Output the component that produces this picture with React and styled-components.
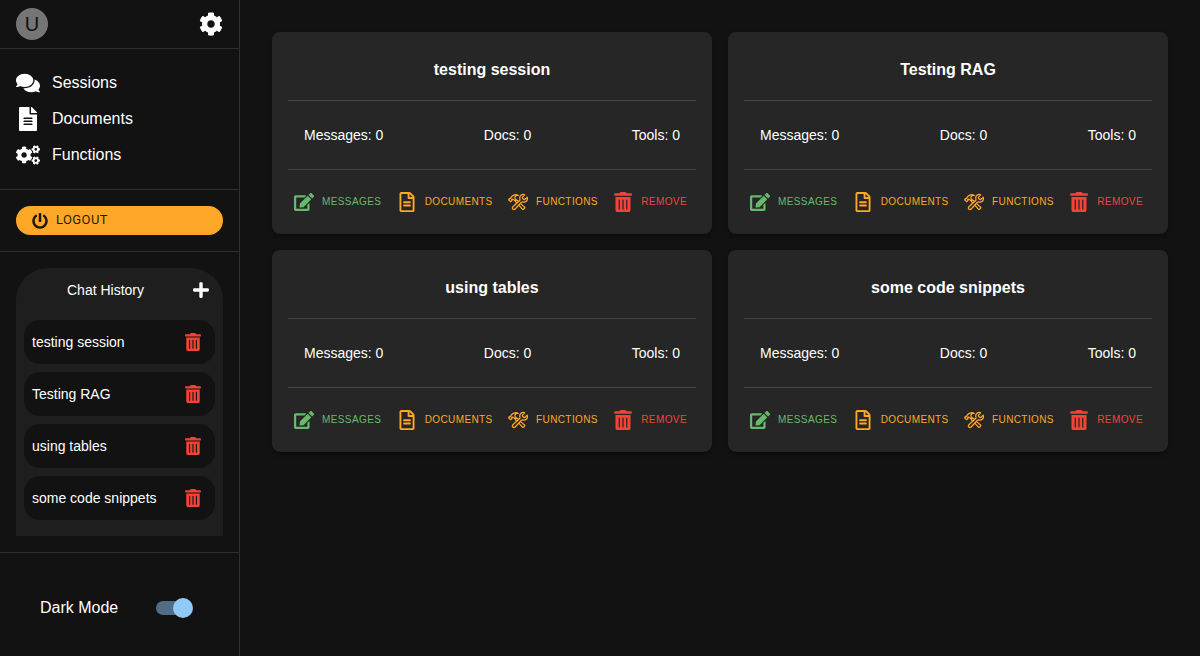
import React, { useState } from "react";
import styled, { createGlobalStyle } from "styled-components";
import { FaCog, FaComments, FaFileAlt, FaCogs, FaPowerOff, FaPlus, FaTrashAlt, FaEdit, FaRegFileAlt } from "react-icons/fa";
import { IoConstructOutline } from "react-icons/io5";

const sessions = ["testing session", "Testing RAG", "using tables", "some code snippets"];

const GlobalStyle = createGlobalStyle`
  *, *::before, *::after { box-sizing: border-box; }
  body {
    margin: 0;
    background: #121212;
    color: #fff;
    font-family: "Liberation Sans", Arial, Helvetica, sans-serif;
    font-size: 16px;
    line-height: 24px;
  }
  button { font: inherit; border: 0; cursor: pointer; }
`;

const Page = styled.div`
  display: flex;
  min-height: 100vh;
`;

const Sidebar = styled.aside`
  display: flex;
  flex-direction: column;
  flex: 0 0 240px;
  border-right: 1px solid #2f2f2f;
`;

const SidebarSection = styled.div`
  padding: 16px;
  border-bottom: 1px solid #2f2f2f;
`;

const SidebarHeader = styled.header`
  display: flex;
  align-items: center;
  justify-content: space-between;
  height: 49px;
  padding: 0 16px;
  border-bottom: 1px solid #2f2f2f;
`;

const Avatar = styled.div`
  display: grid;
  place-items: center;
  width: 32px;
  height: 32px;
  border-radius: 50%;
  background: #757575;
  color: #121212;
  font-size: 20px;
  line-height: 20px;
`;

const IconButton = styled.button`
  display: flex;
  padding: ${({ $pad }) => $pad || 0}px;
  background: none;
  color: ${({ $color }) => $color || "#fff"};
  svg {
    width: ${({ $size }) => $size}px;
    height: ${({ $size }) => $size}px;
  }
`;

const NavLink = styled.a`
  display: flex;
  align-items: center;
  gap: 12px;
  height: 36px;
  color: #fff;
  text-decoration: none;
  svg { width: 24px; height: 24px; }
`;

const LogoutButton = styled.button`
  display: flex;
  align-items: center;
  gap: 8px;
  width: 100%;
  height: 29px;
  padding: 0 16px;
  border-radius: 16px;
  background: #ffa726;
  color: rgba(0, 0, 0, 0.87);
  && {
    font-family: Roboto, sans-serif;
    font-size: 13px;
    line-height: 20px;
  }
  letter-spacing: 0.4px;
  text-transform: uppercase;
  svg { width: 16px; height: 16px; }
`;

const LogoutLabel = styled.span`
  padding-bottom: 2px;
`;

const History = styled.section`
  padding: 0 8px 8px;
  border-radius: 32px 32px 0 0;
  background: #1e1e1e;
`;

const HistoryHeader = styled.div`
  display: flex;
  align-items: center;
  height: 44px;
  margin-bottom: 8px;
`;

const HistoryTitle = styled.h2`
  flex: 1;
  margin: 0;
  font-size: 14px;
  font-weight: 400;
  text-align: center;
`;

const HistoryList = styled.ul`
  display: grid;
  gap: 8px;
  margin: 0;
  padding: 0 0 8px;
  list-style: none;
`;

const HistoryItem = styled.li`
  display: flex;
  align-items: center;
  justify-content: space-between;
  height: 44px;
  padding: 0 8px;
  border-radius: 16px;
  background: #121212;
  font-size: 14px;
`;

const ModeRow = styled.label`
  display: flex;
  align-items: center;
  gap: 38px;
  padding: 43px 40px 0;
`;

const Switch = styled.input`
  appearance: none;
  display: flex;
  align-items: center;
  width: 34px;
  height: 14px;
  margin: 0;
  border-radius: 7px;
  background: #516c85;
  cursor: pointer;
  &::before {
    content: "";
    flex: none;
    width: 20px;
    height: 20px;
    margin-left: -3px;
    border-radius: 50%;
    background: #90caf9;
  }
  &:checked::before { margin-left: 17px; }
`;

const Main = styled.main`
  display: grid;
  flex: 1;
  grid-template-columns: repeat(2, minmax(0, 1fr));
  align-content: start;
  gap: 16px;
  padding: 32px;
`;

const Card = styled.article`
  padding: 16px;
  border-radius: 8px;
  background: #262626;
  box-shadow: 0 2px 4px rgba(0, 0, 0, 0.4);
`;

const CardTitle = styled.h3`
  margin: 0;
  padding: 10px 0 18px;
  border-bottom: 1px solid #444;
  font-size: 16px;
  font-weight: 700;
  text-align: center;
`;

const Stats = styled.div`
  display: flex;
  justify-content: space-between;
  padding: 22px 16px;
  border-bottom: 1px solid #444;
  font-size: 14px;
`;

const Actions = styled.div`
  display: flex;
  justify-content: space-between;
  padding: 16px 9px 0 6px;
`;

const tones = { green: "#66bb6a", orange: "#ffa726", red: "#f44336" };

const Action = styled.button`
  display: flex;
  align-items: center;
  gap: 8px;
  height: 32px;
  padding: 0;
  background: none;
  color: ${({ $tone }) => tones[$tone]};
  && { font-size: 10px; }
  letter-spacing: 0.4px;
  text-transform: uppercase;
  svg { width: 20px; height: 20px; }
`;

function SessionCard({ name }) {
  return (
    <Card>
      <CardTitle>{name}</CardTitle>
      <Stats>
        <span>Messages: 0</span>
        <span>Docs: 0</span>
        <span>Tools: 0</span>
      </Stats>
      <Actions>
        <Action $tone="green"><FaEdit />Messages</Action>
        <Action $tone="orange"><FaRegFileAlt />Documents</Action>
        <Action $tone="orange"><IoConstructOutline />Functions</Action>
        <Action $tone="red"><FaTrashAlt />Remove</Action>
      </Actions>
    </Card>
  );
}

export default function App() {
  const [dark, setDark] = useState(true);
  return (
    <Page>
      <GlobalStyle />
      <Sidebar>
        <SidebarHeader>
          <Avatar>U</Avatar>
          <IconButton $size={24} aria-label="Settings"><FaCog /></IconButton>
        </SidebarHeader>
        <SidebarSection as="nav">
          <NavLink href="#sessions"><FaComments />Sessions</NavLink>
          <NavLink href="#documents"><FaFileAlt />Documents</NavLink>
          <NavLink href="#functions"><FaCogs />Functions</NavLink>
        </SidebarSection>
        <SidebarSection>
          <LogoutButton><FaPowerOff /><LogoutLabel>Logout</LogoutLabel></LogoutButton>
        </SidebarSection>
        <SidebarSection>
          <History>
            <HistoryHeader>
              <HistoryTitle>Chat History</HistoryTitle>
              <IconButton $size={18} $pad={5} aria-label="New chat"><FaPlus /></IconButton>
            </HistoryHeader>
            <HistoryList>
              {sessions.map((name) => (
                <HistoryItem key={name}>
                  {name}
                  <IconButton $size={18} $pad={5} $color="#f44336" aria-label={`Delete ${name}`}><FaTrashAlt /></IconButton>
                </HistoryItem>
              ))}
            </HistoryList>
          </History>
        </SidebarSection>
        <ModeRow>
          Dark Mode
          <Switch type="checkbox" role="switch" checked={dark} onChange={(e) => setDark(e.target.checked)} />
        </ModeRow>
      </Sidebar>
      <Main>
        {sessions.map((name) => <SessionCard key={name} name={name} />)}
      </Main>
    </Page>
  );
}
